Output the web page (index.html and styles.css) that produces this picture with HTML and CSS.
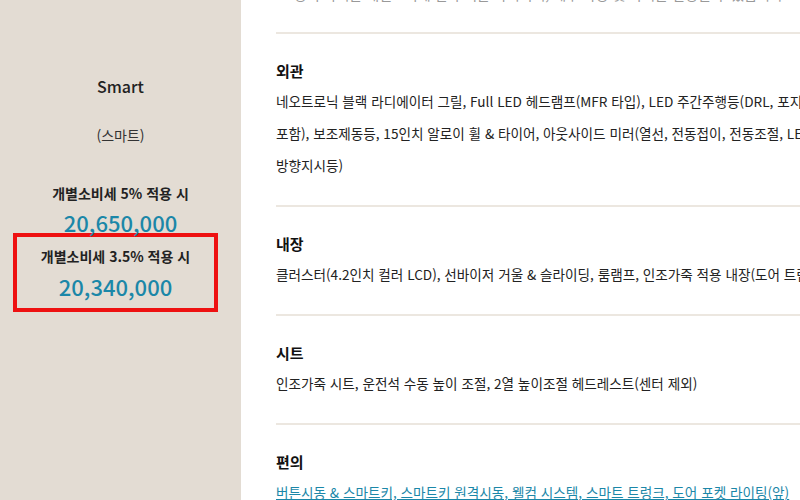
FILE: index.html
```html
<!DOCTYPE html>
<html lang="ko">
<head>
<meta charset="utf-8">
<link rel="stylesheet" href="styles.css">
</head>
<body>
<div class="page">
  <aside class="trim">
    <div class="trim-name">Smart</div>
    <div class="trim-sub">(스마트)</div>
    <div class="price-label">개별소비세 5% 적용 시</div>
    <div class="price">20,650,000</div>
    <div class="highlight">
      <div class="price-label">개별소비세 3.5% 적용 시</div>
      <div class="price">20,340,000</div>
    </div>
  </aside>
  <main class="specs">
    <p class="lead">※ 상기 가격은 개별소비세 인하 기준 가격이며, 세부 사양 및 가격은 변경될 수 있습니다.</p>
    <section class="spec">
      <h3 class="spec-title">외관</h3>
      <p class="spec-text">네오트로닉 블랙 라디에이터 그릴, Full LED 헤드램프(MFR 타입), LED 주간주행등(DRL, 포지셔닝 램프<br>포함), 보조제동등, 15인치 알로이 휠 &amp; 타이어, 아웃사이드 미러(열선, 전동접이, 전동조절, LED<br>방향지시등)</p>
    </section>
    <section class="spec">
      <h3 class="spec-title">내장</h3>
      <p class="spec-text">클러스터(4.2인치 컬러 LCD), 선바이저 거울 &amp; 슬라이딩, 룸램프, 인조가죽 적용 내장(도어 트림)</p>
    </section>
    <section class="spec">
      <h3 class="spec-title">시트</h3>
      <p class="spec-text">인조가죽 시트, 운전석 수동 높이 조절, 2열 높이조절 헤드레스트(센터 제외)</p>
    </section>
    <section class="spec">
      <h3 class="spec-title">편의</h3>
      <p class="spec-text link">버튼시동 &amp; 스마트키, 스마트키 원격시동, 웰컴 시스템, 스마트 트렁크, 도어 포켓 라이팅(앞)</p>
    </section>
  </main>
</div>
</body>
</html>
```

FILE: styles.css
```css
html, body {
  margin: 0;
  padding: 0;
  background: #ffffff;
  overflow: hidden;
}

body {
  font-family: "Noto Sans CJK KR", "Noto Sans", sans-serif;
  color: #222222;
  width: 800px;
  height: 500px;
}

.page {
  display: flex;
  width: 1100px;
  height: 500px;
}

.trim {
  flex: 0 0 241px;
  background: #e3dcd3;
  text-align: center;
  padding-top: 76px;
  box-sizing: border-box;
}

.trim-name {
  font-size: 16px;
  line-height: 20px;
  font-weight: 500;
  color: #222;
}

.trim-sub {
  margin-top: 29px;
  font-size: 14px;
  line-height: 20px;
  color: #333;
}

.price-label {
  margin-top: 38px;
  font-size: 14px;
  line-height: 20px;
  font-weight: 700;
  color: #222;
}

.price {
  margin-top: 5px;
  font-size: 22px;
  line-height: 28px;
  font-weight: 500;
  color: #1b87a8;
}

.highlight {
  margin: -3px 0 0 13px;
  width: 205px;
  box-sizing: border-box;
  border: 4px solid #ee1111;
  padding: 9px 0 8px;
}

.highlight .price-label {
  margin-top: 0;
}

.highlight .price {
  margin-top: 6px;
}

.specs {
  flex: 1 1 auto;
  padding-left: 35px;
}

.lead {
  margin: -22px 0 0;
  padding-bottom: 22px;
  font-size: 14px;
  line-height: 32px;
  color: #999;
  white-space: nowrap;
}

.spec {
  border-top: 2px solid #ece7e0;
  padding: 26px 0 24px;
}

.spec-title {
  margin: 0;
  font-size: 15px;
  line-height: 22px;
  font-weight: 700;
  color: #111;
}

.spec-text {
  margin: 3px 0 0;
  font-size: 13.6px;
  line-height: 32px;
  color: #222;
  white-space: nowrap;
}

.spec-text.link {
  color: #1b87a8;
  text-decoration: underline;
}
```
